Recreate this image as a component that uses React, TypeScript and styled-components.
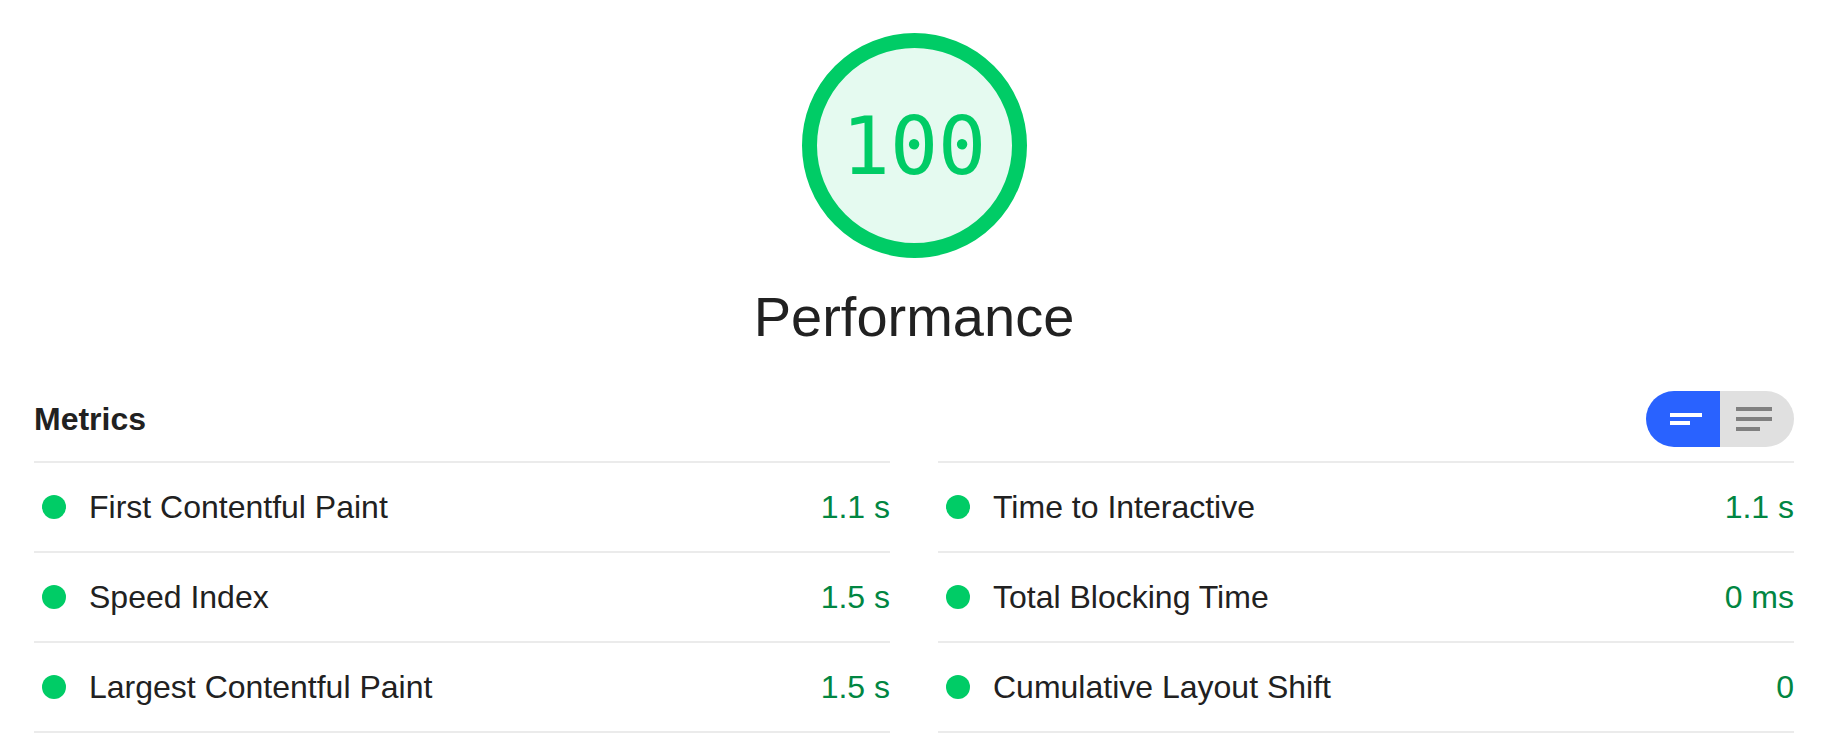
import React from 'react';
import styled, {createGlobalStyle} from 'styled-components';

const GlobalStyle = createGlobalStyle`
  html, body {
    margin: 0;
    padding: 0;
    background: #fff;
  }
  body {
    font-family: "Liberation Sans", Arial, Helvetica, sans-serif;
    color: #212121;
  }
`;

const Page = styled.div`
  padding: 33px 34px 0;
`;

const ScoreSection = styled.section`
  display: flex;
  flex-direction: column;
  align-items: center;
`;

const Gauge = styled.div`
  box-sizing: border-box;
  width: 225px;
  height: 225px;
  border: 15px solid #0c6;
  border-radius: 50%;
  background: #e5faf0;
  display: flex;
  align-items: center;
  justify-content: center;
`;

const Percentage = styled.span`
  font-family: "DejaVu Sans Mono", "Liberation Mono", monospace;
  font-size: 80px;
  line-height: 1;
  color: #0c6;
  margin-top: 2px;
  font-feature-settings: "zero" 1;
`;

const GaugeLabel = styled.div`
  margin-top: 27px;
  font-size: 56px;
  line-height: 64px;
  color: #212121;
`;

const MetricsHeader = styled.div`
  margin-top: 42px;
  display: flex;
  align-items: center;
  justify-content: space-between;
  padding-bottom: 14px;
`;

const Title = styled.h2`
  margin: 0;
  font-size: 32px;
  line-height: 36px;
  font-weight: 700;
  color: #212121;
`;

const Toggle = styled.div`
  display: flex;
  height: 56px;
  border-radius: 28px;
  overflow: hidden;
`;

const ToggleButton = styled.button<{$active?: boolean; $pad: number}>`
  width: 74px;
  height: 56px;
  border: 0;
  margin: 0;
  padding: 0 0 0 ${p => p.$pad}px;
  display: flex;
  align-items: center;
  background: ${p => (p.$active ? '#2962ff' : '#e0e0e0')};
  cursor: pointer;
`;

const Columns = styled.div`
  display: grid;
  grid-template-columns: 1fr 1fr;
  column-gap: 48px;
`;

const Column = styled.div`
  border-top: 2px solid #ebebeb;
`;

const MetricRow = styled.div`
  height: 88px;
  display: flex;
  align-items: center;
  padding-left: 8px;
  border-bottom: 2px solid #ebebeb;
  font-size: 32px;
`;

const Dot = styled.span`
  width: 24px;
  height: 24px;
  border-radius: 50%;
  background: #0c6;
  flex: none;
  margin-right: 23px;
`;

const MetricName = styled.span`
  flex: 1;
  color: #212121;
`;

const MetricValue = styled.span`
  color: #018642;
`;

type Metric = {name: string; value: string};

const left: Metric[] = [
  {name: 'First Contentful Paint', value: '1.1 s'},
  {name: 'Speed Index', value: '1.5 s'},
  {name: 'Largest Contentful Paint', value: '1.5 s'},
];

const right: Metric[] = [
  {name: 'Time to Interactive', value: '1.1 s'},
  {name: 'Total Blocking Time', value: '0 ms'},
  {name: 'Cumulative Layout Shift', value: '0'},
];

function CompactIcon() {
  return (
    <svg width="32" height="12" viewBox="0 0 32 12">
      <rect x="0" y="0" width="32" height="4" fill="#fff" />
      <rect x="0" y="8" width="20" height="4" fill="#fff" />
    </svg>
  );
}

function ExpandedIcon() {
  return (
    <svg width="36" height="24" viewBox="0 0 36 24">
      <rect x="0" y="0" width="36" height="4" fill="#808080" />
      <rect x="0" y="10" width="36" height="4" fill="#808080" />
      <rect x="0" y="20" width="24" height="4" fill="#808080" />
    </svg>
  );
}

function MetricColumn({items}: {items: Metric[]}) {
  return (
    <Column>
      {items.map(m => (
        <MetricRow key={m.name}>
          <Dot />
          <MetricName>{m.name}</MetricName>
          <MetricValue>{m.value}</MetricValue>
        </MetricRow>
      ))}
    </Column>
  );
}

export default function App() {
  return (
    <>
      <GlobalStyle />
      <Page>
        <ScoreSection>
          <Gauge>
            <Percentage>100</Percentage>
          </Gauge>
          <GaugeLabel>Performance</GaugeLabel>
        </ScoreSection>
        <MetricsHeader>
          <Title>Metrics</Title>
          <Toggle>
            <ToggleButton $active $pad={24} aria-label="Compact view">
              <CompactIcon />
            </ToggleButton>
            <ToggleButton $pad={16} aria-label="Expanded view">
              <ExpandedIcon />
            </ToggleButton>
          </Toggle>
        </MetricsHeader>
        <Columns>
          <MetricColumn items={left} />
          <MetricColumn items={right} />
        </Columns>
      </Page>
    </>
  );
}
